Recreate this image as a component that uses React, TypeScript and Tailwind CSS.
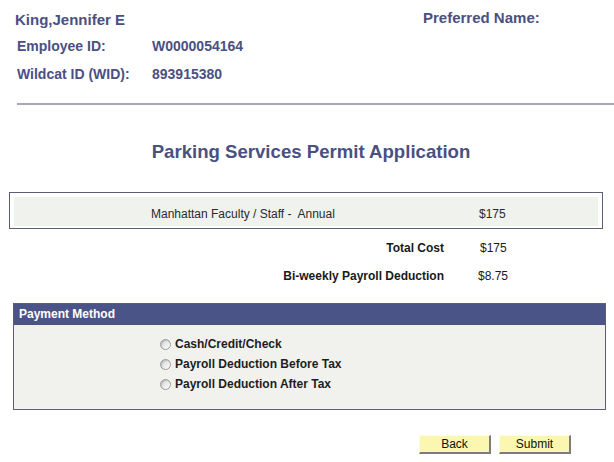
import React from "react";

const label = "text-[#4a5082] font-bold";

const options = ["Cash/Credit/Check", "Payroll Deduction Before Tax", "Payroll Deduction After Tax"];

function Radio() {
  return (
    <span className="inline-block w-[11px] h-[11px] rounded-full border border-[#9c9c9c] bg-gradient-to-br from-[#d4d4d4] to-[#ffffff] shadow-[inset_1px_1px_1px_rgba(0,0,0,0.15)]" />
  );
}

function YellowButton({ text }: { text: string }) {
  return (
    <button className="w-[72px] h-[19px] bg-[#fcf7b0] border-t border-l border-t-[#fffde0] border-l-[#fffde0] border-r-2 border-b-2 border-r-[#7c7c7c] border-b-[#7c7c7c] text-[12px] leading-[15px] text-[#111]">
      {text}
    </button>
  );
}

export default function App() {
  return (
    <div className="w-[614px] h-[462px] bg-white overflow-hidden font-['Liberation_Sans',Arial,sans-serif] pt-[9px]">
      {/* employee header */}
      <div className="flex h-[20px]">
        <div className={`w-[423px] pl-[15px] pt-[2px] text-[15px] leading-[18px] ${label}`}>King,Jennifer E</div>
        <div className={`text-[15px] leading-[18px] ${label}`}>Preferred Name:</div>
      </div>
      <div className="flex mt-[9px] text-[14px] leading-[17px]">
        <div className={`w-[152px] pl-[17px] ${label}`}>Employee ID:</div>
        <div className={label}>W0000054164</div>
      </div>
      <div className="flex mt-[11px] text-[14px] leading-[17px]">
        <div className={`w-[152px] pl-[17px] ${label}`}>Wildcat ID (WID):</div>
        <div className={label}>893915380</div>
      </div>
      <div className="ml-[17px] mt-[20px] h-[2px] bg-[#a6a9b7]" />

      <h1 className={`ml-[8px] mt-[36px] text-center text-[18.6px] leading-[22px] ${label}`}>
        Parking Services Permit Application
      </h1>

      {/* permit */}
      <div className="ml-[9px] mt-[29px] w-[594px] border border-[#5b5e76] pt-[4px] px-[4px] pb-[2px]">
        <div className="bg-[#f0f2ee] h-[29px] pt-[10px] flex text-[12px] leading-[14px] text-[#2a2a2a]">
          <div className="w-[465px] pl-[137px] whitespace-pre">Manhattan Faculty / Staff -  Annual</div>
          <div>$175</div>
        </div>
      </div>

      <div className="flex mt-[12px] text-[12px] leading-[14px] text-[#1a1a1a]">
        <div className="w-[444px] text-right font-bold">Total Cost</div>
        <div className="pl-[36px]">$175</div>
      </div>
      <div className="flex mt-[14px] text-[12px] leading-[14px] text-[#1a1a1a]">
        <div className="w-[444px] text-right font-bold">Bi-weekly Payroll Deduction</div>
        <div className="pl-[34px]">$8.75</div>
      </div>

      {/* payment method */}
      <div className="ml-[13px] mt-[20px] w-[593px] border border-[#5b5e76] bg-[#f1f1ee]">
        <div className="h-[21px] bg-[#4a5486] pl-[5px] text-white font-bold text-[12px] leading-[21px]">Payment Method</div>
        <div className="pt-[9px] pb-[15px] pl-[146px]">
          {options.map((o) => (
            <div key={o} className="h-[20px] flex items-center gap-[4px] text-[12px] font-bold text-[#1e1e1e]">
              <Radio />
              <span>{o}</span>
            </div>
          ))}
        </div>
      </div>

      <div className="flex gap-[8px] ml-[419px] mt-[25px]">
        <YellowButton text="Back" />
        <YellowButton text="Submit" />
      </div>
    </div>
  );
}
